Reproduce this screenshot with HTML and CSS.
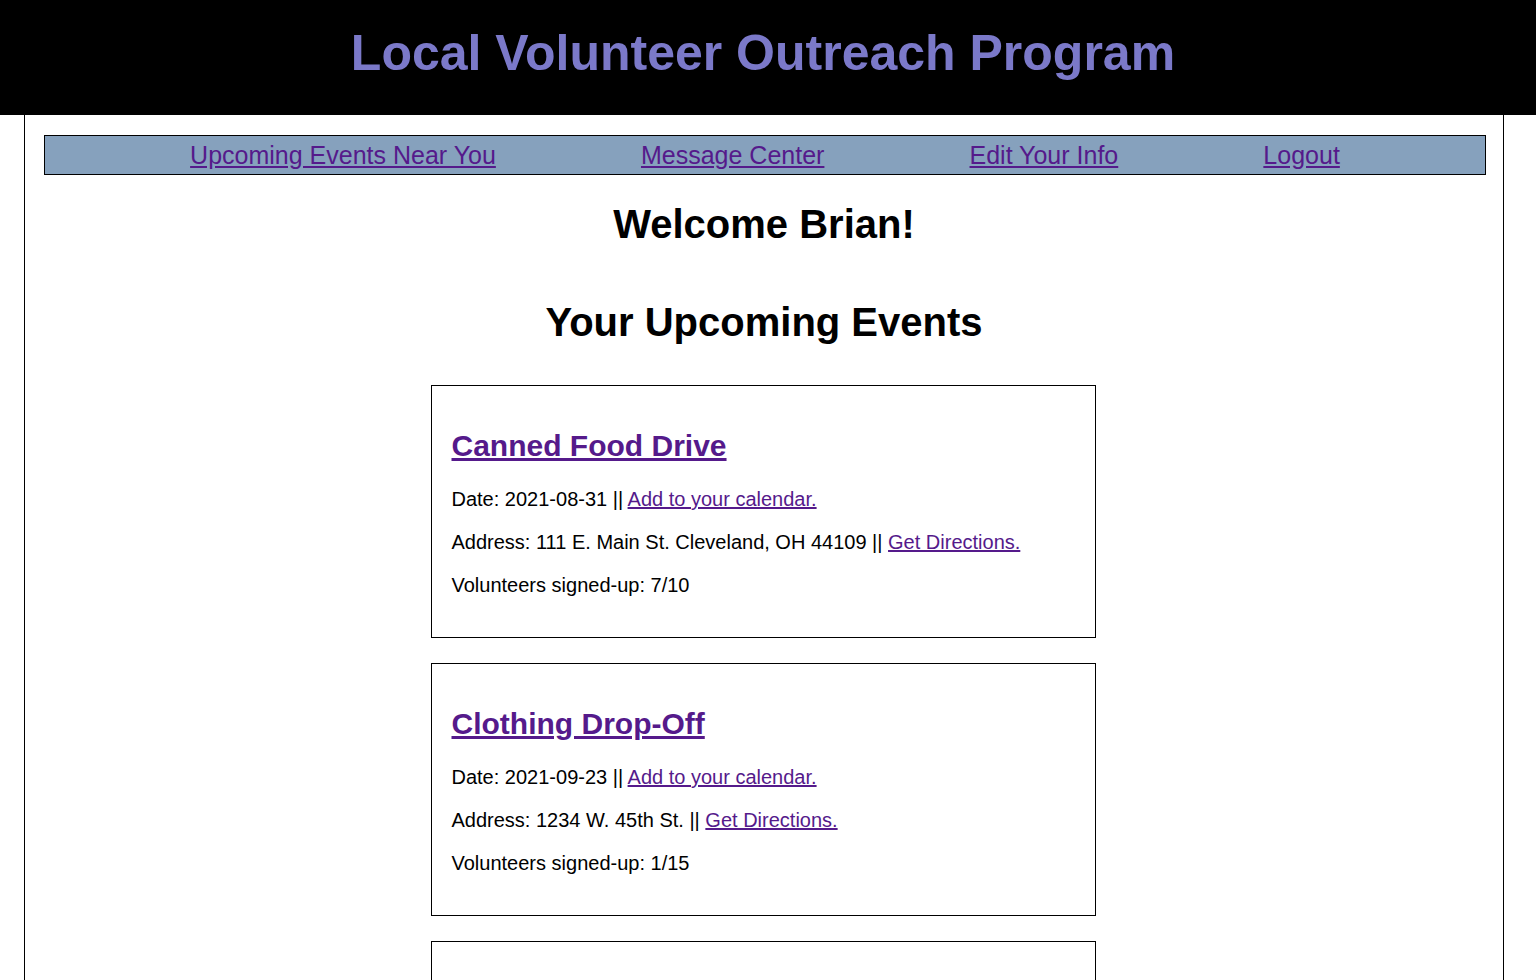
FILE: index.html
```html
<!DOCTYPE html>
<html lang="en">
<head>
<meta charset="utf-8">
<title>Local Volunteer Outreach Program</title>
<link rel="stylesheet" href="styles.css">
</head>
<body>
<header class="site-header">
  <h1 class="site-title">Local Volunteer Outreach Program</h1>
</header>
<main class="page">
  <nav class="nav">
    <a href="#" class="nav-link">Upcoming Events Near You</a>
    <a href="#" class="nav-link">Message Center</a>
    <a href="#" class="nav-link">Edit Your Info</a>
    <a href="#" class="nav-link">Logout</a>
  </nav>
  <h2 class="welcome">Welcome Brian!</h2>
  <h2 class="section-title">Your Upcoming Events</h2>
  <section class="events">
    <article class="event">
      <h3 class="event-title"><a href="#">Canned Food Drive</a></h3>
      <p class="event-line">Date: 2021-08-31 || <a href="#">Add to your calendar.</a></p>
      <p class="event-line">Address: 111 E. Main St. Cleveland, OH 44109 || <a href="#">Get Directions.</a></p>
      <p class="event-line">Volunteers signed-up: 7/10</p>
    </article>
    <article class="event">
      <h3 class="event-title"><a href="#">Clothing Drop-Off</a></h3>
      <p class="event-line">Date: 2021-09-23 || <a href="#">Add to your calendar.</a></p>
      <p class="event-line">Address: 1234 W. 45th St. || <a href="#">Get Directions.</a></p>
      <p class="event-line">Volunteers signed-up: 1/15</p>
    </article>
    <article class="event">
      <h3 class="event-title"><a href="#">Park Clean-Up</a></h3>
      <p class="event-line">Date: 2021-10-09 || <a href="#">Add to your calendar.</a></p>
      <p class="event-line">Address: 500 Lakeshore Blvd. || <a href="#">Get Directions.</a></p>
      <p class="event-line">Volunteers signed-up: 4/20</p>
    </article>
  </section>
</main>
</body>
</html>
```

FILE: styles.css
```css
html, body {
  margin: 0;
  padding: 0;
  background: #ffffff;
  font-family: "Liberation Sans", Arial, sans-serif;
  color: #000000;
}

a {
  color: #551a8b;
}

.site-header {
  background: #000000;
  height: 115px;
  display: flex;
  align-items: center;
  justify-content: center;
}

.site-title {
  margin: 0 10px 10px 0;
  font-size: 50px;
  font-weight: bold;
  color: #7b79c9;
}

.page {
  margin-left: 24px;
  width: 1440px;
  padding: 20px 19px 0 19px;
  border-left: 1px solid #000;
  border-right: 1px solid #000;
  min-height: 900px;
}

.nav {
  display: flex;
  justify-content: space-evenly;
  width: 100%;
  height: 38px;
  align-items: center;
  background: #86a1bd;
  border: 1px solid #000;
}

.nav-link {
  font-size: 25px;
  color: #551a8b;
  line-height: 1;
  padding-top: 0;
}

.welcome,
.section-title {
  text-align: center;
  font-size: 40px;
  font-weight: bold;
  margin: 0;
}

.welcome {
  margin-top: 27px;
}

.section-title {
  margin-top: 53px;
}

.events {
  display: flex;
  flex-direction: column;
  align-items: center;
  gap: 25px;
  margin-top: 40px;
}

.event {
  width: 623px;
  border: 1px solid #000;
  padding: 18px 20px 20px 20px;
  margin-right: 2px;
}

.event-title {
  font-size: 30px;
  font-weight: bold;
  margin: 25px 0 25px 0;
}

.event-line {
  font-size: 20px;
  margin: 20px 0;
}
```
